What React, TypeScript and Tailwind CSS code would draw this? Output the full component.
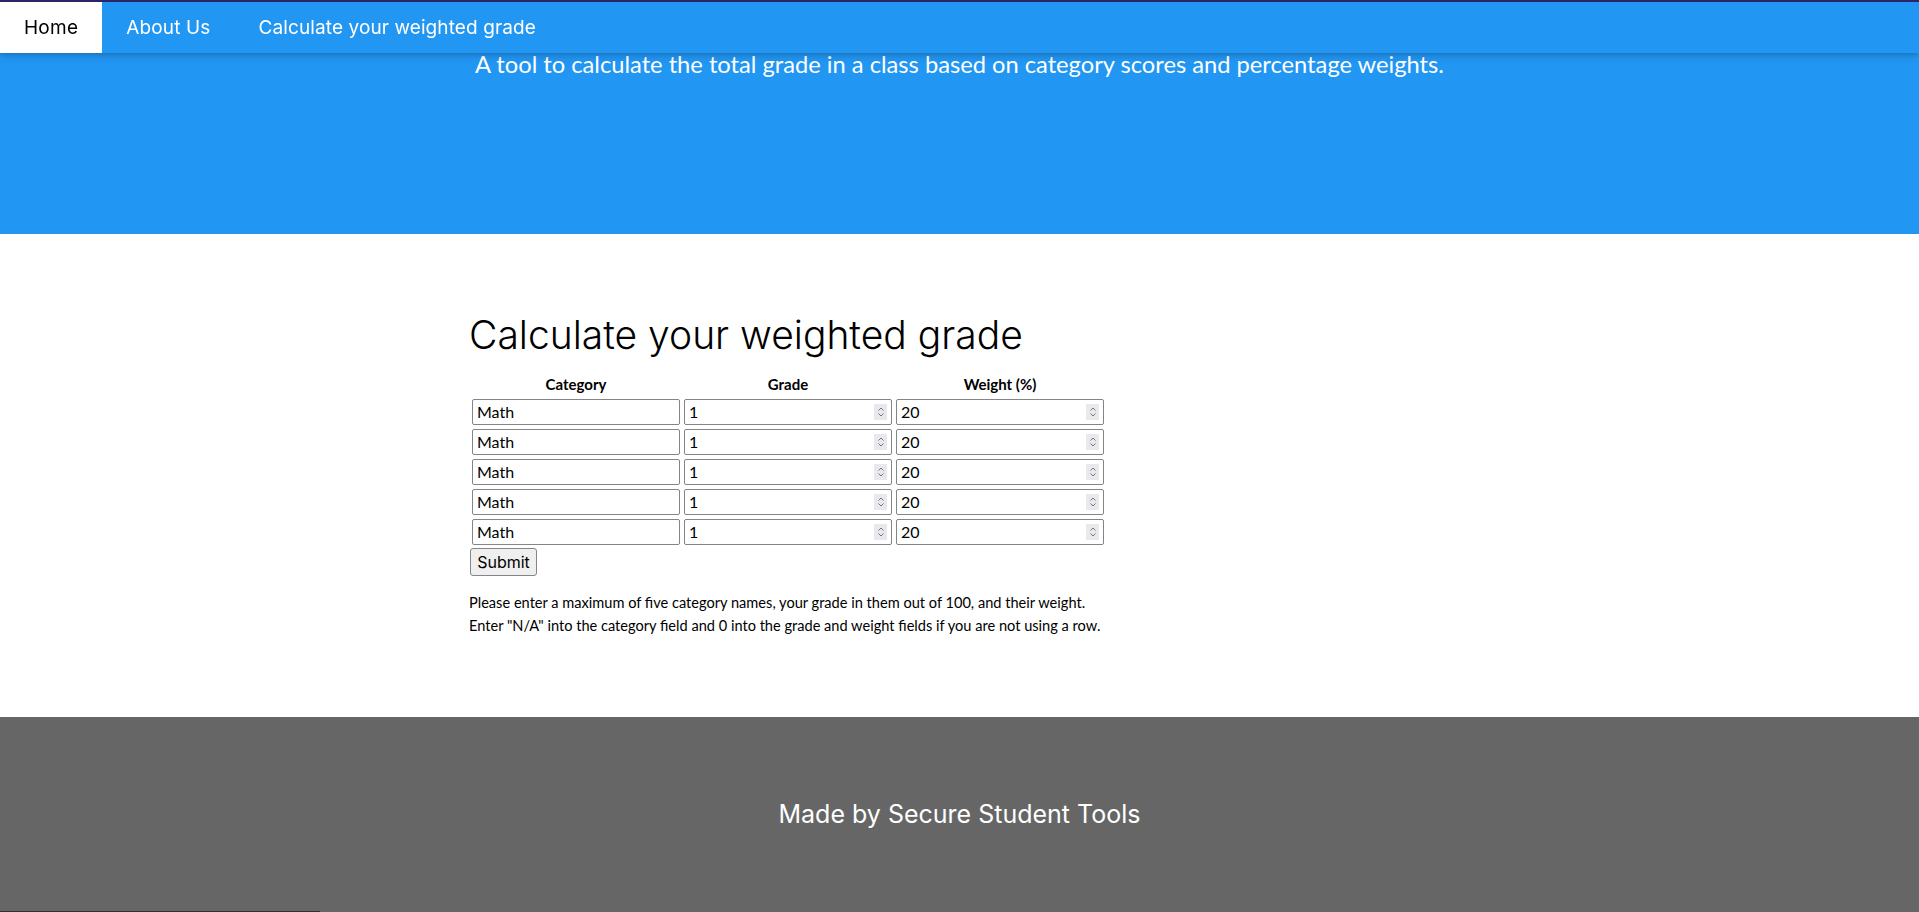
import React from "react";

const mont = { fontFamily: "Inter, 'Open Sans', sans-serif" } as const;

function NumInput({ value }: { value: string }) {
  return (
    <div className="relative h-[26px] w-[208px] rounded-[2px] border border-[#858585] bg-white">
      <span className="absolute left-[4px] top-0 text-[16px] leading-[24px] text-black">{value}</span>
      <div className="absolute right-[4px] top-[4px] flex h-[16px] w-[13px] flex-col items-center justify-center bg-[#e9e9ed]">
        <svg width="8" height="12" viewBox="0 0 8 12" fill="none" stroke="#767676" strokeWidth="1">
          <path d="M1.5 4.5 L4 2 L6.5 4.5" />
          <path d="M1.5 7.5 L4 10 L6.5 7.5" />
        </svg>
      </div>
    </div>
  );
}

function TextInput({ value }: { value: string }) {
  return (
    <div className="relative h-[26px] w-[208px] rounded-[2px] border border-[#858585] bg-white">
      <span className="absolute left-[4px] top-0 text-[16px] leading-[24px] text-black">{value}</span>
    </div>
  );
}

export default function App() {
  const rows = [0, 1, 2, 3, 4];
  return (
    <div className="relative min-h-screen bg-white" style={{ fontFamily: "Lato, 'Open Sans', sans-serif" }}>
      {/* top strip */}
      <div className="fixed left-0 right-0 top-0 z-20 h-[2px] bg-[#2c2466]" />
      {/* nav */}
      <nav
        className="fixed left-0 right-0 top-[2px] z-10 flex h-[51px] bg-[#2196F3] pt-[1px] shadow-[0_2px_5px_0_rgba(0,0,0,0.16),0_2px_10px_0_rgba(0,0,0,0.12)]"
        style={mont}
      >
        <a className="-mt-[1px] flex items-center bg-white px-[24px] pt-[1px] text-[19px] tracking-[0.25px] text-black">Home</a>
        <a className="flex items-center px-[24px] text-[19px] tracking-[0.15px] text-white">About Us</a>
        <a className="flex items-center px-[24px] text-[19px] tracking-[0.1px] text-white">Calculate your weighted grade</a>
      </nav>

      {/* header */}
      <header className="h-[234px] bg-[#2196F3] pt-[47px] text-center">
        <p className="text-[23.7px] leading-[34px] text-white">
          A tool to calculate the total grade in a class based on category scores and percentage weights.
        </p>
      </header>

      {/* main */}
      <main className="pb-[80px] pl-[469px] pt-[79px]">
        <h1 className="text-[39px] font-light leading-[44px] text-black" style={mont}>
          Calculate your weighted grade
        </h1>
        <div className="mt-[16px] pl-[3px]">
          <div className="grid grid-cols-[208px_208px_208px] gap-x-[4px] gap-y-[4px]">
            <div className="text-center text-[15px] font-bold leading-[22px]">Category</div>
            <div className="text-center text-[15px] font-bold leading-[22px]">Grade</div>
            <div className="text-center text-[15px] font-bold leading-[22px]">Weight (%)</div>
            {rows.map((r) => (
              <React.Fragment key={r}>
                <TextInput value="Math" />
                <NumInput value="1" />
                <NumInput value="20" />
              </React.Fragment>
            ))}
          </div>
        </div>
        <button
          className="ml-[1px] mt-[3px] h-[28px] w-[67px] rounded-[3px] border border-[#858585] bg-[#efefef] text-[16px] text-black"
          style={mont}
        >
          Submit
        </button>
        <div className="mt-[15px] text-[14.6px] leading-[23px] text-black">
          <p className="whitespace-nowrap">
            Please enter a maximum of five category names, your grade in them out of 100, and their weight.
          </p>
          <p className="whitespace-nowrap">
            Enter "N/A" into the category field and 0 into the grade and weight fields if you are not using a row.
          </p>
        </div>
      </main>

      {/* footer */}
      <footer className="h-[200px] bg-[#666666] pt-[79px] text-center" style={mont}>
        <p className="text-[25px] leading-[36px] text-white">Made by Secure Student Tools</p>
      </footer>

      <div className="fixed bottom-0 left-0 z-20 h-px w-[320px] bg-[#2f2f2f]" />
    </div>
  );
}
